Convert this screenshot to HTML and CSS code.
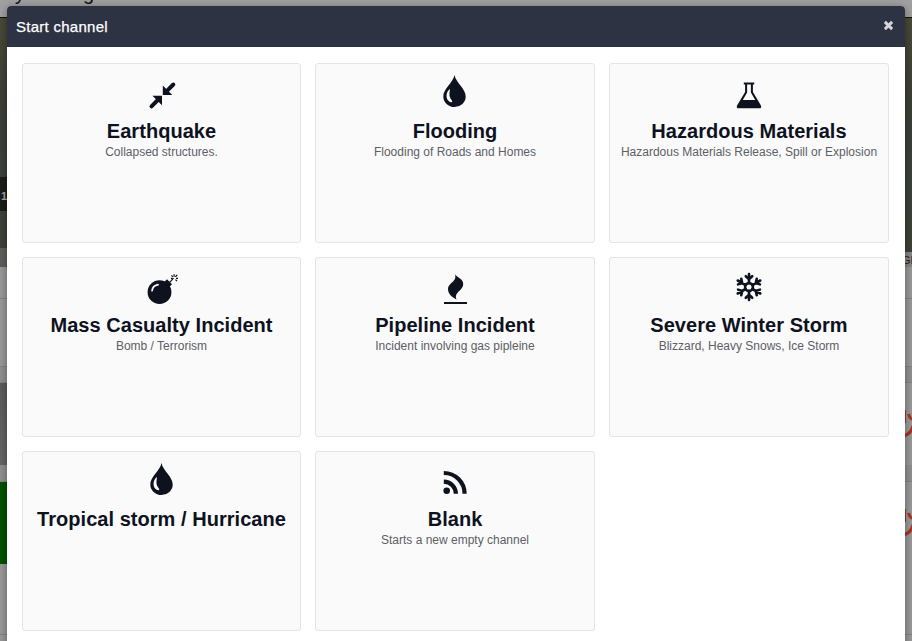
FILE: index.html
```
<!DOCTYPE html>
<html lang="en">
<head>
<meta charset="utf-8">
<title>Start channel</title>
<link rel="stylesheet" href="styles.css">
</head>
<body>
<svg class="defs" width="0" height="0">
  <symbol id="drop" viewBox="0 0 40 44" overflow="visible">
    <path fill-rule="evenodd" d="M19.500 11C18 19 8.300 24.500 8.300 32.500A11.200 10.500 0 0 0 30.700 32.500C30.700 24.500 21 19 19.500 11ZM14.100 25.500C10.800 29 10.500 35 14.500 37.800C16.200 38.800 18 38.100 16.900 36.500C14.300 33.500 14 30.500 14.800 26.700C15 25.500 14.600 25 14.100 25.500Z"/>
  </symbol>
  <symbol id="mark" viewBox="0 0 8 32">
    <path d="M.5 0V13M4.500 4Q5.500 8 8 9.500M9 16Q6.500 24.500 0 25.500"/>
  </symbol>
</svg>
<div class="page">
  <div class="topbar"><span>y</span><span>g</span></div>
  <div class="photo">
    <div class="photo-left"><span class="count">1</span><span class="caption"></span></div>
    <div class="photo-right"><span class="caption">GI</span></div>
  </div>
  <div class="line l1"></div>
  <div class="line l2"></div>
  <div class="line l3"></div>
  <div class="row"><i class="thumb gray"></i><svg class="mark"><use href="#mark"/></svg></div>
  <div class="line l4"></div>
  <div class="row"><i class="thumb green"></i><svg class="mark"><use href="#mark"/></svg></div>
  <div class="line l5"></div>
</div>

<div class="modal">
  <header class="modal-head">
    <h1>Start channel</h1>
    <svg class="close" viewBox="0 0 10 10"><path d="M1.700 1.700L8.300 8.300M8.300 1.700L1.700 8.300"/></svg>
  </header>
  <div class="cards">
    <div class="card">
      <svg class="icon" viewBox="0 0 40 44"><path d="M20.800 31V21.500L30.300 31ZM20 31.800V41.300L10.500 31.800Z"/><path class="shaft" d="M24.500 27.300L31.300 20.500M16.300 35.500L9.500 42.300"/></svg>
      <h2>Earthquake</h2><p>Collapsed structures.</p>
    </div>
    <div class="card">
      <svg class="icon"><use href="#drop"/></svg>
      <h2>Flooding</h2><p>Flooding of Roads and Homes</p>
    </div>
    <div class="card">
      <svg class="icon" viewBox="0 0 40 44"><path fill-rule="evenodd" d="M14.800 18.500H25.200V20.400H23.900V28L31.800 41.200Q33.300 44.300 30 44.300H10Q6.700 44.300 8.200 41.200L16.100 28V20.400H14.800ZM18.100 20.400V28.500L13.800 35.900H26.200L21.900 28.500V20.400Z"/></svg>
      <h2>Hazardous Materials</h2><p>Hazardous Materials Release, Spill or Explosion</p>
    </div>
    <div class="card">
      <svg class="icon" viewBox="0 0 40 44"><g transform="translate(-.5 -.3)"><circle cx="18" cy="34.500" r="11.900"/><path d="M23 24L25.500 21.500L30.500 26.500L28 29Z"/><path class="thin" d="M28 25L32 20.500M32.600 16.500V19M30 17.700L31.300 19.200M29.500 20.700H31M35.700 17.300L33.800 19.200M34.500 20.700H36.500M34 22L35.500 23.500"/><path class="shine" d="M10.600 33Q11 28 16.500 26.900"/></g></svg>
      <h2>Mass Casualty Incident</h2><p>Bomb / Terrorism</p>
    </div>
    <div class="card">
      <svg class="icon" viewBox="0 0 40 44"><path d="M19.800 16.300C22.500 20 28.200 20.500 28.200 26C28.200 30 25 32 22.800 34.500C20.500 37 20.500 39 21.500 41.500C17 39 13 36 13 31C13 27.500 16 25.500 18.500 23C20.800 20.800 20.800 18.500 19.800 16.300ZM9 44H32V46H9Z"/></svg>
      <h2>Pipeline Incident</h2><p>Incident involving gas pipleine</p>
    </div>
    <div class="card">
      <svg class="icon flake" viewBox="0 0 40 44"><path id="arm" d="M20 25V16M16.800 18.200L20 21.200L23.200 18.200"/><use href="#arm" transform="rotate(60 20 29)"/><use href="#arm" transform="rotate(120 20 29)"/><use href="#arm" transform="rotate(180 20 29)"/><use href="#arm" transform="rotate(240 20 29)"/><use href="#arm" transform="rotate(300 20 29)"/><circle cx="20" cy="29" r="3.900"/></svg>
      <h2>Severe Winter Storm</h2><p>Blizzard, Heavy Snows, Ice Storm</p>
    </div>
    <div class="card">
      <svg class="icon"><use href="#drop"/></svg>
      <h2>Tropical storm / Hurricane</h2>
    </div>
    <div class="card">
      <svg class="icon rss" viewBox="0 0 40 44"><circle class="dot" cx="11.700" cy="38.800" r="3.300"/><path d="M8.800 29.700A12.100 12.100 0 0 1 20.900 41.800M8.800 21A20.800 20.800 0 0 1 29.600 41.800"/></svg>
      <h2>Blank</h2><p>Starts a new empty channel</p>
    </div>
  </div>
</div>
</body>
</html>
```
FILE: styles.css
```
* { box-sizing: border-box; }
body {
  margin: 0;
  width: 912px;
  height: 641px;
  overflow: hidden;
  position: relative;
  background: #999;
  font-family: "Liberation Sans", Arial, sans-serif;
}
.defs { position: absolute; }
.page { height: 641px; }
.topbar {
  height: 18px;
  display: flex;
  gap: 58px;
  padding-left: 15px;
  background: #a0a0a0;
  border-bottom: 1px solid #111;
  font-size: 20px;
  line-height: 18px;
  color: #111;
}
.topbar span { margin-top: -16px; }
.photo {
  height: 249px;
  display: flex;
  justify-content: space-between;
  background: linear-gradient(#4b4a38, #3c4036 30%, #3a423c 65%, #3f4233);
}
.photo-left, .photo-right {
  width: 7px;
  display: flex;
  flex-direction: column;
  justify-content: flex-end;
}
.count {
  height: 34px;
  margin-bottom: 37px;
  background: #1c1c19;
  color: #a8a8a8;
  font: bold 11px/38px "Liberation Sans", sans-serif;
  text-indent: 1px;
}
.caption { height: 19px; background: #5f605b; }
.photo-right .caption {
  height: 15px;
  background: #868686;
  color: #222;
  font-size: 11px;
  line-height: 17px;
  text-indent: -3px;
}
.line { border-bottom: 1px solid #858585; }
.l1 { height: 32px; }
.l2 { height: 68px; }
.l3 { height: 16px; background: #909090; }
.l4 { height: 17px; background: #909090; }
.l5 { height: 71px; }
.row {
  height: 82px;
  display: flex;
  justify-content: space-between;
}
.thumb { width: 7px; }
.gray { background: linear-gradient(#5b5b5b, #666); }
.green { background: #005200; }
.mark {
  width: 8px;
  height: 32px;
  margin-top: 27px;
  fill: none;
  stroke: #a83522;
  stroke-width: 3;
}
.modal {
  position: absolute;
  left: 7px;
  top: 6px;
  width: 898px;
  height: 650px;
  background: #fff;
  border-radius: 4px 4px 0 0;
  box-shadow: 0 2px 8px rgba(0, 0, 0, .4);
}
.modal-head {
  height: 41px;
  padding: 0 11px 0 9px;
  display: flex;
  align-items: center;
  justify-content: space-between;
  background: #2d3342;
  border-radius: 4px 4px 0 0;
}
h1 {
  margin: 0;
  font-size: 15px;
  font-weight: 400;
  line-height: 20px;
  letter-spacing: .27px;
  color: #fff;
  -webkit-text-stroke: .25px #fff;
}
.close {
  width: 11px;
  height: 11px;
  margin-top: -2px;
  fill: none;
  stroke: #d5d6da;
  stroke-width: 2.600;
}
.cards {
  padding: 16px 16px 0 15px;
  display: grid;
  grid-template-columns: 279px 280px 280px;
  grid-auto-rows: 180px;
  gap: 14px;
}
.card {
  display: flex;
  flex-direction: column;
  align-items: center;
  white-space: nowrap;
  background: #fafafa;
  border: 1px solid #e4e4e4;
  border-radius: 3px;
}
.icon {
  width: 40px;
  height: 44px;
  flex: none;
  overflow: visible;
  fill: #0e121f;
}
.shaft { fill: none; stroke: #0e121f; stroke-width: 4; stroke-linecap: round; }
.thin { fill: none; stroke: #0e121f; stroke-width: 1.200; }
.shine { fill: none; stroke: #fafafa; stroke-width: 1.800; stroke-linecap: round; }
.flake { fill: none; stroke: #0e121f; stroke-width: 2.600; stroke-linecap: round; }
.rss { fill: none; stroke: #0e121f; stroke-width: 4.200; }
.dot { fill: #0e121f; stroke: none; }
h2 {
  margin: 11px 0 0;
  font-size: 20px;
  line-height: 24px;
  letter-spacing: .04px;
  color: #0e121f;
}
p {
  margin: 1px 0 0;
  font-size: 12px;
  line-height: 16px;
  color: #5d5e66;
}
```
